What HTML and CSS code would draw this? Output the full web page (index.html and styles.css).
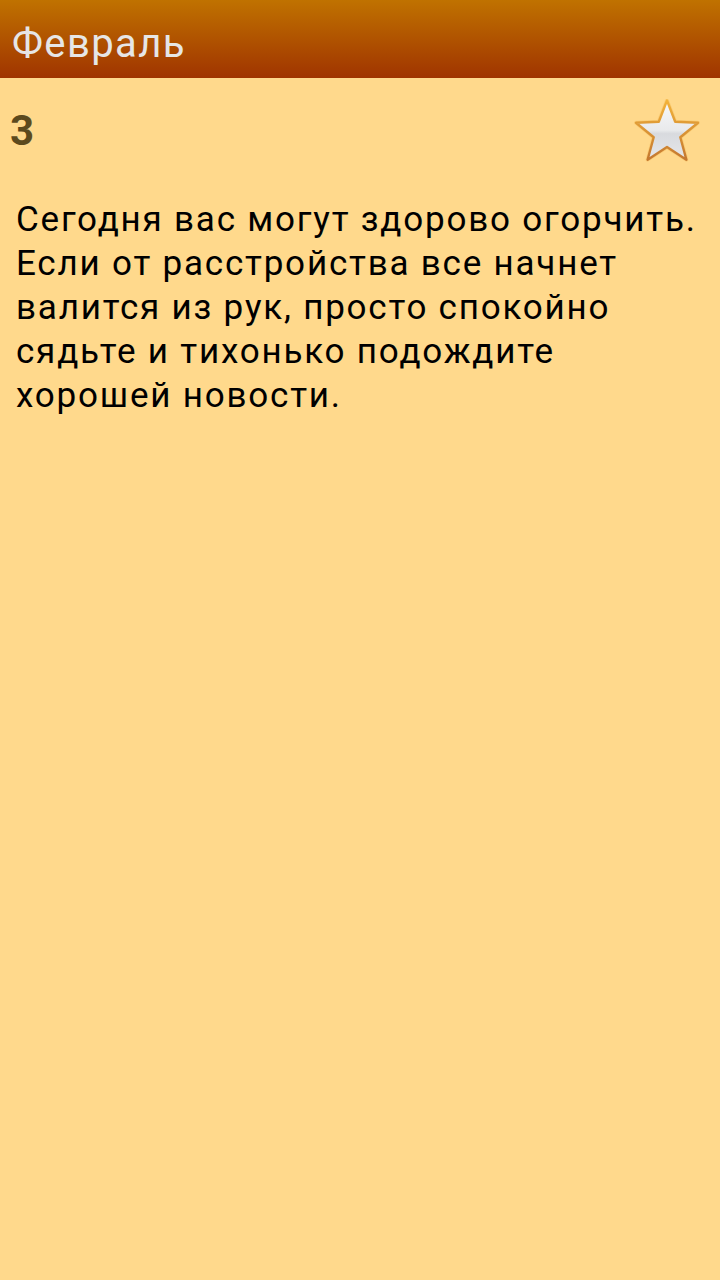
FILE: index.html
```html
<!DOCTYPE html>
<html lang="ru">
<head>
<meta charset="utf-8">
<link rel="stylesheet" href="styles.css">
</head>
<body>
<header class="bar"><h1 class="title">Февраль</h1></header>
<main class="content">
  <div class="day-row">
    <span class="day">3</span>
    <svg class="star" width="66" height="66" viewBox="0 0 66 66">
      <defs>
        <linearGradient id="sf" x1="0" y1="0" x2="0" y2="1">
          <stop offset="0" stop-color="#f8f8f9"/>
          <stop offset="0.5" stop-color="#e9eaec"/>
          <stop offset="0.56" stop-color="#d8dade"/>
          <stop offset="1" stop-color="#e6e7ea"/>
        </linearGradient>
        <linearGradient id="ss" x1="0" y1="0" x2="0" y2="1">
          <stop offset="0" stop-color="#f2b23a"/>
          <stop offset="1" stop-color="#c47830"/>
        </linearGradient>
        <filter id="glow" x="-20%" y="-20%" width="140%" height="140%">
          <feGaussianBlur stdDeviation="0.6"/>
        </filter>
      </defs>
      <path d="M33 1.5 L41.2 22.7 L64 23.8 L46.3 38.3 L52.4 60.7 L33 48 L13.6 60.7 L19.7 38.3 L2 23.8 L24.8 22.7 Z" fill="none" stroke="#f6c060" stroke-width="4" stroke-linejoin="round" opacity="0.5" filter="url(#glow)"/>
      <path d="M33 1.5 L41.2 22.7 L64 23.8 L46.3 38.3 L52.4 60.7 L33 48 L13.6 60.7 L19.7 38.3 L2 23.8 L24.8 22.7 Z" fill="url(#sf)" stroke="url(#ss)" stroke-width="2.4" stroke-linejoin="round"/>
    </svg>
  </div>
  <p class="text">Сегодня вас могут здорово огорчить. Если от расстройства все начнет валится из рук, просто спокойно сядьте и тихонько подождите хорошей новости.</p>
</main>
</body>
</html>
```
FILE: styles.css
```css
html, body { margin: 0; padding: 0; }
body {
  width: 720px;
  height: 1280px;
  background: #ffd98c;
  font-family: Roboto, "Noto Sans", sans-serif;
  overflow: hidden;
}
.bar {
  height: 78px;
  background: linear-gradient(#c07200, #a03400);
  display: flex;
  align-items: center;
  padding: 0 12px;
  box-sizing: border-box;
}
.title {
  margin: 0;
  font-size: 40px;
  font-weight: 400;
  color: #e6e6e6;
  letter-spacing: 1.4px;
  line-height: 1;
  padding-top: 10px;
}
.content { padding: 0 16px; }
.day-row {
  display: flex;
  justify-content: space-between;
  align-items: center;
  height: 108px;
  margin-left: -6px;
  margin-right: 4px;
}
.day {
  font-size: 42px;
  font-weight: 700;
  color: #5c4a1e;
  padding-bottom: 4px;
}
.text {
  margin: 12px 0 0;
  font-size: 35px;
  letter-spacing: 1.8px;
  line-height: 44px;
  color: #000;
}
```
